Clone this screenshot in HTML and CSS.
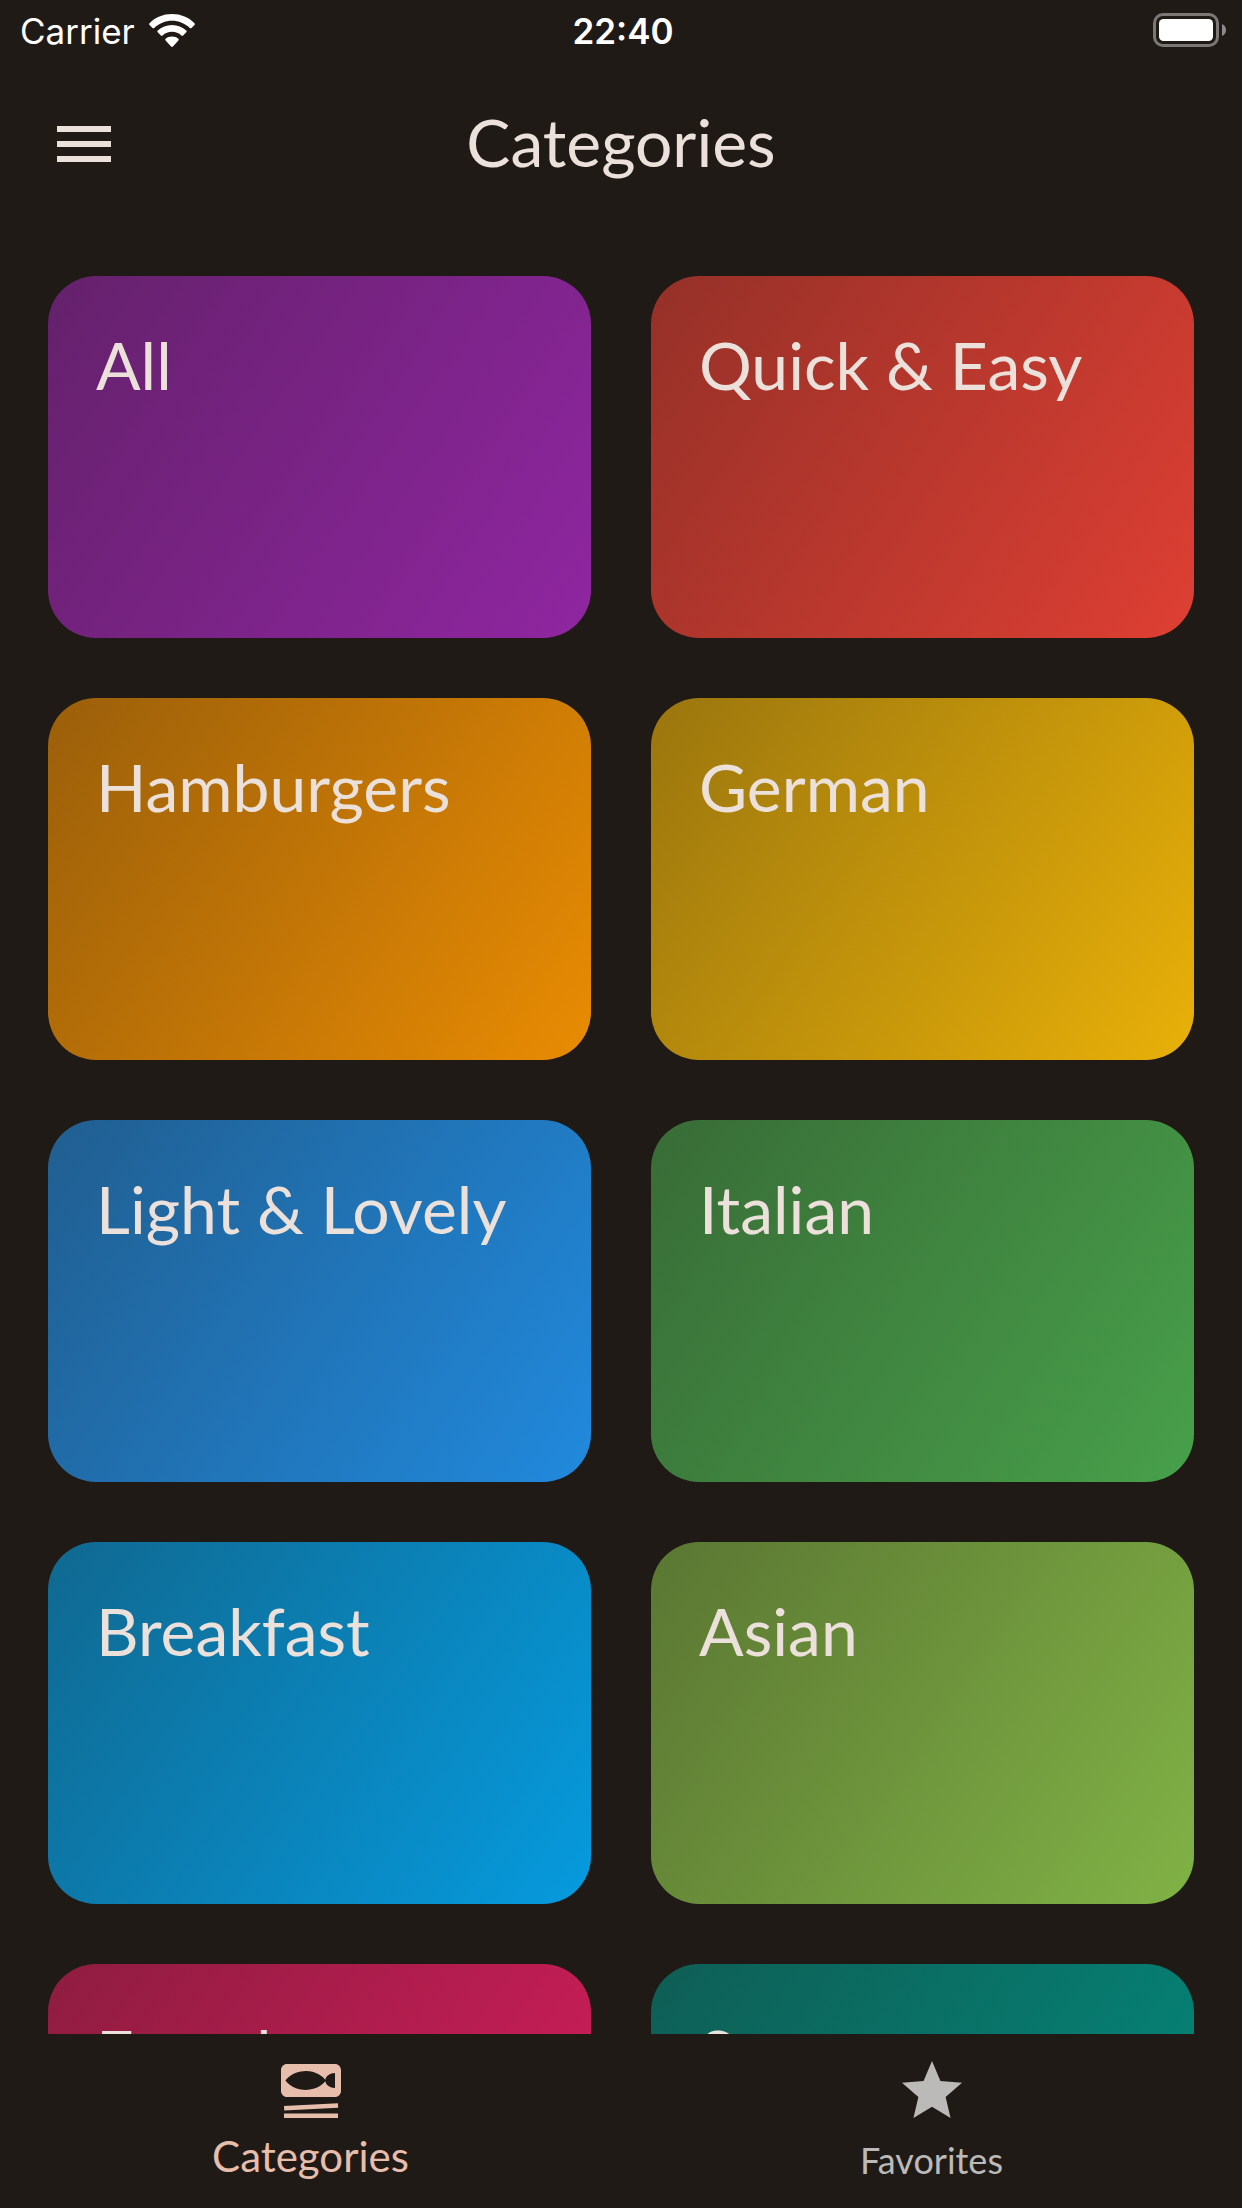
FILE: index.html
```html
<!DOCTYPE html>
<html lang="en">
<head>
  <meta charset="utf-8">
  <meta name="viewport" content="width=device-width, initial-scale=1">
  <title>Categories</title>
  <link rel="stylesheet" href="styles.css">
</head>
<body>
  <div class="app">
    <div class="status">
      <div class="status-left">
        <span class="status-text">Carrier</span>
        <svg class="wifi" viewBox="0 0 46 33" aria-hidden="true">
          <path d="M23 0C32 0 40 3.400 45.500 9.200c.500.500.500 1.200 0 1.700l-3 3c-.500.500-1.200.500-1.700 0C36 9.500 29.800 6.800 23 6.800S10 9.500 5.200 13.900c-.500.500-1.200.500-1.700 0l-3-3c-.500-.500-.500-1.200 0-1.700C6 3.400 14 0 23 0z"/>
          <path d="M23 11c5.500 0 10.500 2.100 14.300 5.600.500.500.500 1.200 0 1.700l-3.200 3.100c-.500.500-1.200.500-1.700 0C29.900 19.200 26.600 17.800 23 17.800s-6.900 1.400-9.400 3.600c-.500.500-1.200.500-1.700 0l-3.200-3.100c-.500-.500-.500-1.200 0-1.700C12.500 13.100 17.500 11 23 11z"/>
          <path d="M23 22.600c2.500 0 4.700.800 6.400 2.200.500.500.500 1.100 0 1.600L23.900 32.500c-.500.500-1.300.500-1.800 0L16.600 26.400c-.500-.500-.500-1.100 0-1.600 1.700-1.400 3.900-2.200 6.400-2.200z"/>
        </svg>
      </div>
      <time class="status-text clock">22:40</time>
      <div class="status-right">
        <svg class="battery" viewBox="0 0 73 34" role="img" aria-label="Battery full">
          <rect class="battery-shell" x="1.500" y="1.500" width="63" height="31" rx="8.500"/>
          <rect class="battery-level" x="6" y="6" width="54" height="22" rx="4.500"/>
          <path class="battery-tip" d="M69 11c2.500 1 4 3.300 4 6s-1.500 5-4 6z"/>
        </svg>
      </div>
    </div>

    <header class="bar">
      <button class="menu" type="button" aria-label="Open menu">
        <svg class="icon" viewBox="0 0 24 24" aria-hidden="true"><path d="M3 6h18v2H3zM3 11h18v2H3zM3 16h18v2H3z"/></svg>
      </button>
      <h1 class="title">Categories</h1>
    </header>

    <main class="grid">
      <a class="card purple" href="#all">All</a>
      <a class="card red" href="#quick-easy">Quick &amp; Easy</a>
      <a class="card orange" href="#hamburgers">Hamburgers</a>
      <a class="card amber" href="#german">German</a>
      <a class="card blue" href="#light-lovely">Light &amp; Lovely</a>
      <a class="card green" href="#italian">Italian</a>
      <a class="card light-blue" href="#breakfast">Breakfast</a>
      <a class="card light-green" href="#asian">Asian</a>
      <a class="card pink" href="#french">French</a>
      <a class="card teal" href="#summer">Summer</a>
    </main>

    <nav class="tabs">
      <a class="tab active" href="#categories" aria-current="page">
        <svg class="icon" viewBox="0 0 24 24" aria-hidden="true">
          <path fill-rule="evenodd" d="M4 3h16c1.100 0 2 .900 2 2v7c0 1.100-.900 2-2 2H4c-1.100 0-2-.900-2-2V5c0-1.100.900-2 2-2zM20 6c-1.680 0-3.040.980-3.210 2.230C16.150 7.500 14.060 5.350 10.250 5.350 5.580 5.350 3.500 8.500 3.500 8.500s2.080 3.150 6.750 3.150c3.810 0 5.900-2.150 6.540-2.880C16.960 10.020 18.320 11 20 11z"/>
          <path d="M3 17l17.980-.940.070 1.500L3.080 18.500zM3 19.480h18v1.500H3z"/>
        </svg>
        <span class="tab-label">Categories</span>
      </a>
      <a class="tab" href="#favorites">
        <svg class="icon" viewBox="0 0 24 24" aria-hidden="true"><path d="M12 17.270L18.180 21l-1.640-7.030L22 9.240l-7.190-.610L12 2 9.190 8.630 2 9.240l5.460 4.730L5.820 21z"/></svg>
        <span class="tab-label">Favorites</span>
      </a>
    </nav>
  </div>
</body>
</html>
```
FILE: styles.css
```css
:root {
  --surface: #201a17;
  --on-surface: #ece0da;
  --accent: #e7bdab;
  --muted: #bcbab9;
}

* {
  box-sizing: border-box;
}

body {
  margin: 0;
  background: var(--surface);
  color: var(--on-surface);
  font-family: Lato, "Liberation Sans", sans-serif;
}

a {
  color: inherit;
  text-decoration: none;
}

.app {
  display: flex;
  flex-direction: column;
  height: 100vh;
}

/* Status bar */
.status {
  display: grid;
  grid-template-columns: 1fr auto 1fr;
  align-items: center;
  height: 60px;
  padding: 0 16px 0 20px;
  color: #fff;
  font-family: Inter, "Liberation Sans", sans-serif;
  font-size: 35px;
  line-height: 40px;
}

.status-left {
  display: flex;
  align-items: center;
  gap: 14px;
}

.status-right {
  display: flex;
  justify-content: flex-end;
}

.status-text {
  padding-top: 2px;
}

.wifi {
  width: 46px;
  height: 33px;
  fill: currentColor;
}

.clock {
  font-weight: 600;
}

.battery {
  width: 73px;
  height: 34px;
}

.battery-shell {
  fill: none;
  stroke: #7b7876;
  stroke-width: 3;
}

.battery-level {
  fill: #fff;
}

.battery-tip {
  fill: #8d8a89;
}

/* App bar */
.bar {
  display: grid;
  grid-template-columns: 1fr auto 1fr;
  align-items: center;
  height: 168px;
  padding: 0 48px;
}

.menu {
  justify-self: start;
  padding: 0;
  border: 0;
  background: none;
  color: inherit;
}

.icon {
  display: block;
  width: 72px;
  height: 72px;
  fill: currentColor;
}

.title {
  margin: 0;
  padding-bottom: 4px;
  font-size: 66px;
  font-weight: 400;
  line-height: 82px;
}

/* Category cards */
.grid {
  flex: 1;
  min-height: 0;
  overflow: hidden;
  display: grid;
  grid-template-columns: 1fr 1fr;
  align-content: start;
  gap: 60px;
  padding: 48px;
}

.card {
  aspect-ratio: 3 / 2;
  padding: 48px;
  border-radius: 48px;
  background: linear-gradient(124deg,
    color-mix(in srgb, var(--tone) 55%, transparent),
    color-mix(in srgb, var(--tone) 90%, transparent));
  font-size: 66px;
  line-height: 82px;
}

.purple { --tone: #9c27b0; }
.red { --tone: #f44336; }
.orange { --tone: #ff9800; }
.amber { --tone: #ffc107; }
.blue { --tone: #2196f3; }
.green { --tone: #4caf50; }
.light-blue { --tone: #03a9f4; }
.light-green { --tone: #8bc34a; }
.pink { --tone: #e91e63; }
.teal { --tone: #009688; }

/* Bottom tabs */
.tabs {
  display: grid;
  grid-template-columns: 1fr 1fr;
  height: 174px;
  padding-top: 21px;
}

.tab {
  display: flex;
  flex-direction: column;
  align-items: center;
  gap: 3px;
  color: var(--muted);
  font-size: 36px;
  line-height: 60px;
}

.tab.active {
  color: var(--accent);
  font-size: 42px;
  line-height: 52px;
}
```
